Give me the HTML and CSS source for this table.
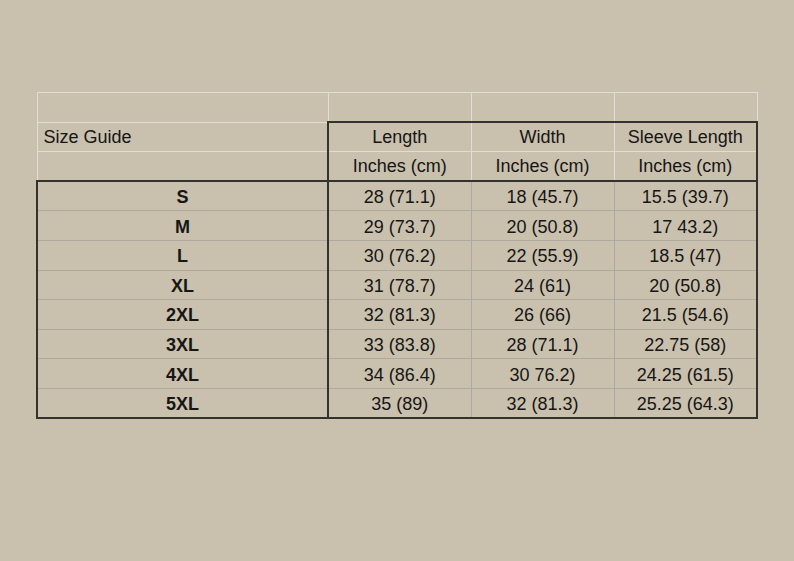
FILE: index.html
```html
<!DOCTYPE html>
<html>
<head>
<meta charset="utf-8">
<link rel="stylesheet" href="styles.css">
</head>
<body>
<div class="page">
<table class="guide">
  <colgroup>
    <col class="c-size"><col class="c-val"><col class="c-val"><col class="c-val">
  </colgroup>
  <tr class="blank"><td></td><td></td><td></td><td></td></tr>
  <tr class="head1">
    <td class="title">Size Guide</td><td class="h first">Length</td><td class="h">Width</td><td class="h last">Sleeve Length</td>
  </tr>
  <tr class="head2">
    <td></td><td class="h first">Inches (cm)</td><td class="h">Inches (cm)</td><td class="h last">Inches (cm)</td>
  </tr>
  <tr class="row top"><th>S</th><td>28 (71.1)</td><td>18 (45.7)</td><td class="last">15.5 (39.7)</td></tr>
  <tr class="row"><th>M</th><td>29 (73.7)</td><td>20 (50.8)</td><td class="last">17 43.2)</td></tr>
  <tr class="row"><th>L</th><td>30 (76.2)</td><td>22 (55.9)</td><td class="last">18.5 (47)</td></tr>
  <tr class="row"><th>XL</th><td>31 (78.7)</td><td>24 (61)</td><td class="last">20 (50.8)</td></tr>
  <tr class="row"><th>2XL</th><td>32 (81.3)</td><td>26 (66)</td><td class="last">21.5 (54.6)</td></tr>
  <tr class="row"><th>3XL</th><td>33 (83.8)</td><td>28 (71.1)</td><td class="last">22.75 (58)</td></tr>
  <tr class="row"><th>4XL</th><td>34 (86.4)</td><td>30 76.2)</td><td class="last">24.25 (61.5)</td></tr>
  <tr class="row bottom"><th>5XL</th><td>35 (89)</td><td>32 (81.3)</td><td class="last">25.25 (64.3)</td></tr>
</table>
</div>
</body>
</html>
```

FILE: styles.css
```css
html, body {
  margin: 0;
  padding: 0;
  background: #c9c0ae;
}
.page {
  width: 794px;
  height: 561px;
  padding: 92px 0 0 36px;
  box-sizing: border-box;
}
.guide {
  border-collapse: collapse;
  table-layout: fixed;
  width: 721px;
  font-family: "Liberation Sans", Arial, sans-serif;
  font-size: 18px;
  color: #161615;
}
.c-size { width: 291px; }
.c-val { width: 143px; }
.guide tr { height: 29.6px; }
.guide td, .guide th {
  padding: 0;
  border: 1px solid #e2ddd2;
  text-align: center;
  vertical-align: middle;
  line-height: 20px;
  white-space: nowrap;
}
.guide th { font-weight: bold; }
.guide td.title {
  text-align: left;
  padding-left: 6px;
}
.head1 .h { border-top: 2px solid #34322e; }
.guide .h.first { border-left: 2px solid #34322e; }
.guide .h.last { border-right: 2px solid #34322e; }

.guide .row td, .guide .row th {
  border-color: #aeaaa2;
  padding-top: 2px;
}
.guide .row th { border-left: 2px solid #34322e; border-right: 2px solid #34322e; }
.guide .row td.last { border-right: 2px solid #34322e; }
.guide .row.top td, .guide .row.top th { border-top: 2px solid #34322e; }
.guide .row.bottom td, .guide .row.bottom th { border-bottom: 2px solid #34322e; }
```
